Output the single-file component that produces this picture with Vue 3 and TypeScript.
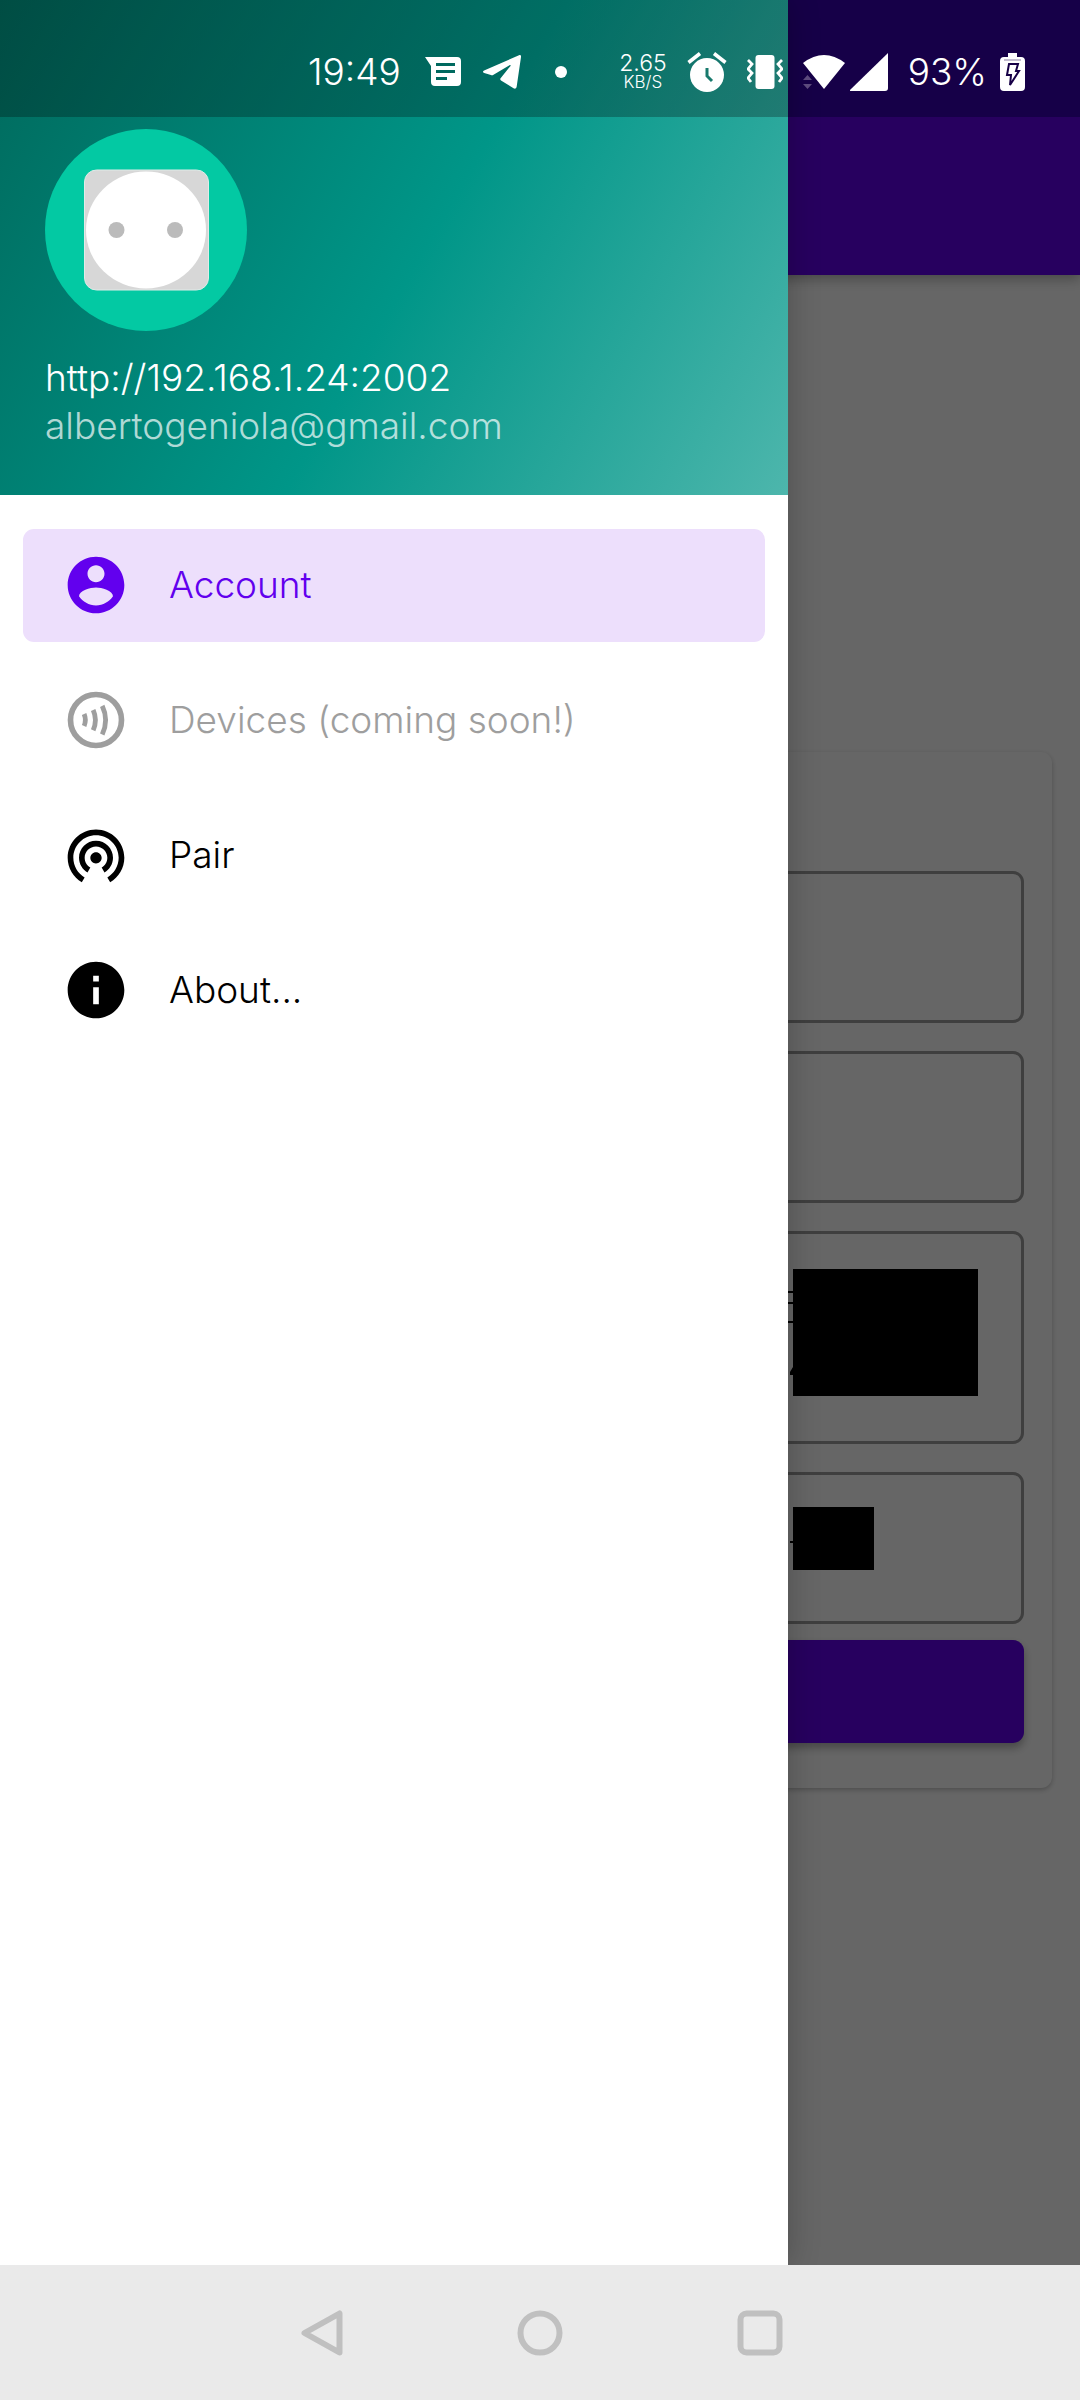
<script setup lang="ts">
import { ref } from 'vue'

interface MenuItem {
  id: string
  label: string
  disabled?: boolean
}

const menu: MenuItem[] = [
  { id: 'account', label: 'Account' },
  { id: 'devices', label: 'Devices (coming soon!)', disabled: true },
  { id: 'pair', label: 'Pair' },
  { id: 'about', label: 'About...' },
]

const active = ref('account')

function open(item: MenuItem) {
  if (!item.disabled) active.value = item.id
}
</script>

<template>
  <div class="screen">
    <div class="stage">
      <div class="app">
        <header class="app-bar"></header>
        <main class="content">
          <form class="card" @submit.prevent>
            <input class="field" type="text" aria-label="Server" readonly />
            <input class="field" type="text" aria-label="User" readonly />
            <div class="masked">
              <textarea class="field tall" aria-label="Token" readonly></textarea>
              <svg class="mask mask-large" viewBox="0 0 190 127" aria-hidden="true">
                <path d="M5 0h185v127H5z" />
                <path d="M0 22h5v2H0zM0 33h5v2H0zM0 52h5v2H0zM2 106v-3l3-5v8z" />
              </svg>
            </div>
            <div class="masked">
              <input class="field" type="text" aria-label="Key" readonly />
              <svg class="mask mask-small" viewBox="0 0 86 63" aria-hidden="true">
                <path d="M5 0h81v63H5zM2 34h3v2H2z" />
              </svg>
            </div>
            <button class="submit" type="submit" aria-label="Save"></button>
          </form>
        </main>
      </div>

      <div class="scrim"></div>

      <aside class="drawer">
        <header class="profile">
          <svg class="avatar" viewBox="0 0 202 202" aria-hidden="true">
            <circle cx="101" cy="101" r="101" fill="#03c9a3" />
            <rect x="39.5" y="41" width="124" height="120" rx="12" fill="#d7d7d7" stroke="#e0ebe8" stroke-width="1" />
            <ellipse cx="101" cy="101" rx="60" ry="58.500" fill="#fff" />
            <circle cx="71.500" cy="101" r="8" fill="#bbb" />
            <circle cx="130" cy="101" r="8" fill="#bbb" />
          </svg>
          <div class="server">http://192.168.1.24:2002</div>
          <div class="email">albertogeniola@gmail.com</div>
        </header>

        <nav class="menu">
          <a
            v-for="item in menu"
            :key="item.id"
            class="item"
            :class="{ active: item.id === active, disabled: item.disabled }"
            :href="'#' + item.id"
            :aria-disabled="item.disabled"
            @click.prevent="open(item)"
          >
            <svg class="icon" viewBox="0 0 24 24" fill="currentColor" aria-hidden="true">
              <path
                v-if="item.id === 'account'"
                d="M12 2C6.480 2 2 6.480 2 12s4.480 10 10 10 10-4.480 10-10S17.520 2 12 2zm0 3c1.660 0 3 1.340 3 3s-1.340 3-3 3-3-1.340-3-3 1.340-3 3-3zm0 14.200c-2.500 0-4.710-1.280-6-3.220.03-1.990 4-3.080 6-3.080 1.990 0 5.970 1.090 6 3.080-1.290 1.940-3.500 3.220-6 3.220z"
              />
              <g v-else-if="item.id === 'devices'" fill="none" stroke="currentColor">
                <circle cx="12" cy="12" r="9" stroke-width="2" />
                <path d="M7.800 9.900Q8.700 12 7.800 14.100M11 8.500Q12.600 12 11 15.600M14.200 7Q16.600 12 14.200 17.100" stroke-width="1.700" />
              </g>
              <path
                v-else-if="item.id === 'pair'"
                d="M12 11c-1.100 0-2 .9-2 2s.9 2 2 2 2-.9 2-2-.9-2-2-2zm6 2c0-3.310-2.690-6-6-6s-6 2.690-6 6c0 2.220 1.210 4.150 3 5.190l1-1.740c-1.190-.7-2-1.970-2-3.450 0-2.210 1.790-4 4-4s4 1.790 4 4c0 1.480-.81 2.750-2 3.450l1 1.740c1.790-1.040 3-2.970 3-5.190zM12 3C6.480 3 2 7.480 2 13c0 3.700 2.010 6.920 4.990 8.650l1-1.730C5.610 18.530 4 15.960 4 13c0-4.420 3.580-8 8-8s8 3.580 8 8c0 2.960-1.610 5.530-4 6.920l1 1.730c2.990-1.730 5-4.950 5-8.650 0-5.520-4.480-10-10-10z"
              />
              <path
                v-else
                d="M12 2C6.480 2 2 6.480 2 12s4.480 10 10 10 10-4.480 10-10S17.520 2 12 2zm1 15h-2v-6h2v6zm0-8h-2V7h2v2z"
              />
            </svg>
            <span>{{ item.label }}</span>
          </a>
        </nav>
      </aside>

      <div class="status">
        <div class="status-start">
          <span class="clock">19:49</span>
          <svg width="36" height="30" viewBox="0 0 36 30" aria-hidden="true">
            <path fill="#fff" fill-rule="evenodd" d="M0 0h32q4 0 4 4v21q0 4-4 4H10q-4 0-4-4V9zM11 6v3h19V6zM11 13v3h19v-3zM11 20v3h11v-3z" />
          </svg>
          <svg width="38" height="34" viewBox="0 0 38 34" aria-hidden="true">
            <path fill="#fff" d="M36 .3c1.500-.6 2.200.1 2 1.700l-4.300 29.600c-.4 2-1.600 2.500-3.200 1.600L18 25.400c-1-.7-1-1.500-.2-2.400L27.500 11c.5-.8-.2-1.400-1-.8L10.500 19.800c-.9.6-1.700.6-2.600.3L1.200 18C-.4 17.500-.4 16.200 1.100 15.500z" />
          </svg>
          <svg class="dot" width="12" height="12" viewBox="0 0 12 12" aria-hidden="true">
            <circle cx="6" cy="6" r="6" fill="#fff" />
          </svg>
        </div>
        <div class="status-end">
          <span class="speed"><b>2.65</b><small>KB/S</small></span>
          <svg width="40" height="40" viewBox="0 0 40 40" aria-hidden="true">
            <circle cx="20" cy="23" r="17" fill="#fff" />
            <path d="M1.500 10.500 13 1.500M38.500 10.500 27 1.500" stroke="#fff" stroke-width="3.600" />
            <path d="M20 16v8l5 5" fill="none" stroke="#187a6d" stroke-width="3" />
          </svg>
          <svg width="36" height="36" viewBox="0 0 36 36" aria-hidden="true">
            <rect x="8.500" y="1" width="19" height="34" rx="3" fill="#fff" />
            <path d="M1 6l4 4-4 5 4 4-4 5 3 4M35 6l-4 4 4 5-4 4 4 5-3 4" fill="none" stroke="#fff" stroke-width="2.800" />
          </svg>
          <div class="signals">
            <svg width="42" height="38" viewBox="0 0 42 38" aria-hidden="true">
              <path d="M0 10Q21-6 42 10L21 36z" fill="#fff" />
              <path d="M0 27l4.500-5 4.500 5zM0 31h9l-4.500 5z" fill="#5c4a7c" />
            </svg>
            <svg width="38" height="38" viewBox="0 0 38 38" aria-hidden="true">
              <path d="M38 0v35q0 3-3 3H1q-2 0-.5-1.500z" fill="#fff" />
            </svg>
          </div>
          <span class="percent">93%</span>
          <svg class="battery" width="25" height="38" viewBox="0 0 25 38" aria-hidden="true">
            <path d="M8 0h9v4h4q4 0 4 4v26q0 4-4 4H4q-4 0-4-4V8q0-4 4-4h4z" fill="#fff" />
            <path d="M4 7h17" stroke="#c3bdd0" stroke-width="2" />
            <path d="M9 11h9l-2 7h3L10 32l1-10H7z" fill="#fff" stroke="#170047" stroke-width="2" />
          </svg>
        </div>
      </div>
    </div>

    <footer class="system-nav">
      <button type="button" aria-label="Back">
        <svg width="46" height="46" viewBox="0 0 46 46" aria-hidden="true">
          <path d="M42.500 3.500v39L7.500 23z" />
        </svg>
      </button>
      <button type="button" aria-label="Home">
        <svg width="46" height="46" viewBox="0 0 46 46" aria-hidden="true">
          <circle cx="23" cy="23" r="19.500" />
        </svg>
      </button>
      <button type="button" aria-label="Recents">
        <svg width="46" height="46" viewBox="0 0 46 46" aria-hidden="true">
          <rect x="3.500" y="3.500" width="39" height="39" rx="6" />
        </svg>
      </button>
    </footer>
  </div>
</template>

<style>
body {
  margin: 0;
}
</style>

<style scoped>
* {
  box-sizing: border-box;
}

.screen {
  display: flex;
  flex-direction: column;
  min-height: 100vh;
  font-family: Inter, "Liberation Sans", sans-serif;
  font-size: 37px;
  font-weight: 300;
  line-height: 48px;
}

svg {
  display: block;
  flex: none;
}

/* The app, its scrim, the drawer and the status icons are layers of one grid cell. */
.stage {
  display: grid;
  flex: 1;
  grid-template-columns: 100%;
  overflow: hidden;
}

.stage > * {
  grid-area: 1 / 1;
}

.app {
  display: flex;
  flex-direction: column;
  background: #fff;
}

.app-bar {
  height: 275px;
  border-top: 117px solid #3700b3;
  background: #6200ee;
  box-shadow: 0 4px 12px rgba(0, 0, 0, 0.3);
}

.content {
  display: flex;
  flex: 1;
  flex-direction: column;
  justify-content: center;
  padding: 28px;
}

.card {
  display: flex;
  flex-direction: column;
  gap: 28px;
  padding: 119px 28px 45px;
  border-radius: 11px;
  box-shadow: 0 2px 5px rgba(0, 0, 0, 0.24);
}

.field {
  display: block;
  width: 100%;
  height: 152px;
  margin: 0;
  padding: 38px 44px;
  border: 3px solid #9e9e9e;
  border-radius: 11px;
  background: none;
  font: inherit;
  resize: none;
}

.tall {
  height: 213px;
}

.masked {
  position: relative;
}

.mask {
  position: absolute;
}

.mask-large {
  top: 38px;
  right: 46px;
  width: 190px;
}

.mask-small {
  top: 35px;
  right: 150px;
  width: 86px;
}

.submit {
  height: 103px;
  margin-top: -12px;
  border: 0;
  border-radius: 11px;
  background: #6200ee;
  box-shadow: 0 5px 8px rgba(0, 0, 0, 0.3);
}

.scrim {
  z-index: 1;
  background: rgba(0, 0, 0, 0.6);
}

.drawer {
  z-index: 2;
  width: calc(100% - 292px);
  background: #fff;
  box-shadow: 0 0 30px rgba(0, 0, 0, 0.24);
}

.profile {
  padding: 129px 45px 45px;
  background:
    linear-gradient(#0004, #0004) top / 100% 117px no-repeat,
    linear-gradient(120deg, #00695c, #009688 53%, #4db6ac);
  color: #fff;
}

.avatar {
  width: 202px;
  margin-bottom: 23px;
}

.email {
  color: rgba(255, 255, 255, 0.7);
}

.menu {
  display: flex;
  flex-direction: column;
  gap: 22px;
  padding: 34px 23px;
}

.item {
  display: flex;
  align-items: center;
  gap: 39px;
  height: 113px;
  padding: 0 39px 2px;
  border-radius: 11px;
  color: #000;
  text-decoration: none;
}

.item.active {
  background: #eddffc;
  color: #6200ee;
}

.item.disabled {
  color: #9e9e9e;
}

.icon {
  width: 68px;
  height: 68px;
}

.status {
  z-index: 3;
  display: flex;
  align-items: center;
  justify-content: space-between;
  align-self: start;
  height: 117px;
  padding: 27px 55px 0 308px;
  color: #fff;
}

.status-start {
  display: flex;
  align-items: center;
  gap: 22px;
}

.status-end {
  display: flex;
  align-items: center;
  gap: 20px;
}

.clock {
  min-width: 95px;
}

.dot {
  margin-left: 12px;
}

.speed {
  display: flex;
  flex-direction: column;
  align-items: center;
}

.speed b {
  font-size: 23px;
  font-weight: 300;
  line-height: 20px;
}

.speed small {
  font-size: 17px;
  line-height: 18px;
}

.signals {
  display: flex;
  gap: 5px;
}

.battery {
  margin-left: -7px;
}

.system-nav {
  display: flex;
  justify-content: center;
  height: 135px;
  background: #eaeaea;
}

.system-nav button {
  display: flex;
  align-items: center;
  justify-content: center;
  width: 220px;
  padding: 0;
  border: 0;
  background: none;
}

.system-nav svg {
  fill: none;
  stroke: #c0c0c0;
  stroke-width: 6;
  stroke-linejoin: round;
}
</style>
